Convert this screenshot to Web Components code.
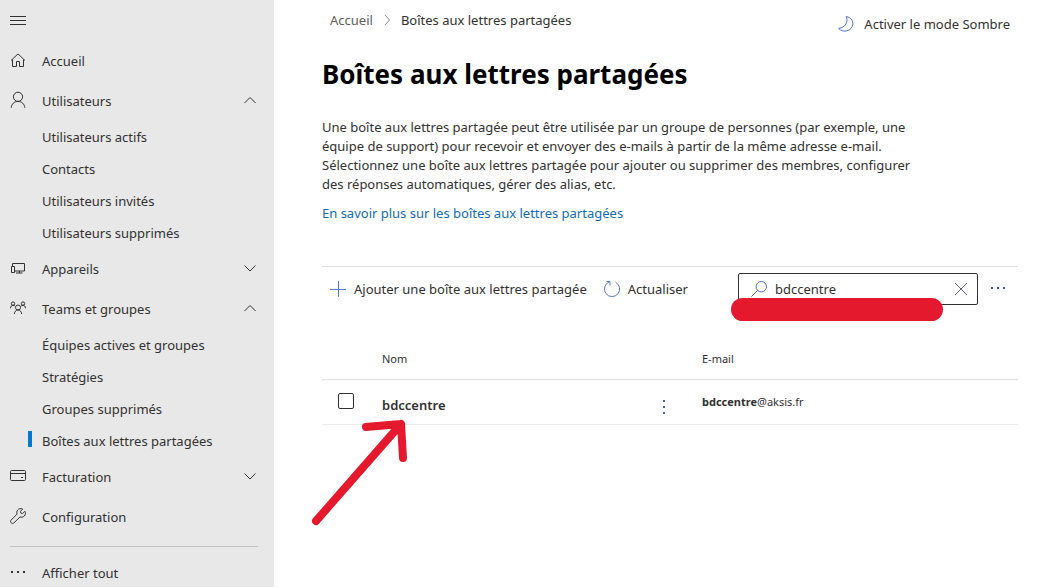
<!DOCTYPE html>
<html lang="fr">
<head>
<meta charset="utf-8">
<meta name="viewport" content="width=device-width, initial-scale=1">
<title>Boîtes aux lettres partagées</title>
<style>
  body {
    margin: 0;
    background: #fff;
    color: #323130;
    font-family: "Noto Sans", "Open Sans", sans-serif;
    font-size: 13px;
    line-height: 20px;
  }
</style>
</head>
<body>
<admin-shell>
  <side-nav slot="nav">
    <nav-group icon="home" href="#accueil">Accueil</nav-group>
    <nav-group icon="person" open>Utilisateurs
      <nav-link slot="items" href="#actifs">Utilisateurs actifs</nav-link>
      <nav-link slot="items" href="#contacts">Contacts</nav-link>
      <nav-link slot="items" href="#invites">Utilisateurs invités</nav-link>
      <nav-link slot="items" href="#supprimes">Utilisateurs supprimés</nav-link>
    </nav-group>
    <nav-group icon="devices" collapsible>Appareils</nav-group>
    <nav-group icon="team" open>Teams et groupes
      <nav-link slot="items" href="#equipes">Équipes actives et groupes</nav-link>
      <nav-link slot="items" href="#strategies">Stratégies</nav-link>
      <nav-link slot="items" href="#groupes-supprimes">Groupes supprimés</nav-link>
      <nav-link slot="items" href="#boites" current>Boîtes aux lettres partagées</nav-link>
    </nav-group>
    <nav-group icon="card" collapsible>Facturation</nav-group>
    <nav-group icon="wrench" href="#configuration">Configuration</nav-group>
    <nav-group slot="footer" icon="more" href="#tout">Afficher tout</nav-group>
  </side-nav>
  <top-bar>Boîtes aux lettres partagées</top-bar>
  <page-intro>
    <span slot="title">Boîtes aux lettres partagées</span>
    Une boîte aux lettres partagée peut être utilisée par un groupe de personnes (par exemple, une équipe de support) pour recevoir et envoyer des e-mails à partir de la même adresse e-mail. Sélectionnez une boîte aux lettres partagée pour ajouter ou supprimer des membres, configurer des réponses automatiques, gérer des alias, etc.
    <span slot="link">En savoir plus sur les boîtes aux lettres partagées</span>
  </page-intro>
  <command-bar></command-bar>
  <mailbox-table></mailbox-table>
</admin-shell>

<script>
  const ICONS = {
    menu: '<path d="M0 3.500h16M0 7.500h16M0 11.500h16"/>',
    home: '<path d="M1 7.500 8 .9 15 7.500M2.500 6.500v7h4V8.500h3v5h4v-7"/>',
    person: '<circle cx="8" cy="3.800" r="4.600"/><path d="M1.200 14.800C1.500 11 4.200 8.400 8 8.400s6.500 2.600 6.800 6.400"/>',
    devices: '<path d="M2.500 5V2.500h12v7.500H5M1.500 5.500h3v6h-3zM9.500 10v2M6 12h6.500"/>',
    team: '<circle cx="8" cy="6.500" r="2.500"/><path d="M4.300 13c.3-2.500 1.700-4 3.700-4s3.400 1.500 3.700 4M.5 7.300c.1-2 1.100-3 2.500-3 1 0 1.800.5 2.300 1.200M15.500 7.300c-.1-2-1.100-3-2.500-3-1 0-1.800.5-2.300 1.200"/><circle cx="3" cy="2.600" r="1.700"/><circle cx="13" cy="2.600" r="1.700"/>',
    card: '<rect x=".5" y="1.500" width="15" height="10" rx="1"/><path d="M.5 4.500h15M11 8.500h2"/>',
    wrench: '<path d="M14.900 2.300 12.600 4.600 10.900 4.100 10.400 2.400 12.700.1C10.800-.9 8.700-.4 7.600 1.100c-.9 1.200-1 2.700-.5 4L1.200 11c-.9.9-.9 2 0 2.800s2 .8 2.800 0l6-5.900c1.500.6 3.100.3 4.300-.9 1.300-1.300 1.500-3.100.6-4.700z"/>',
    more: '<g fill="currentColor" stroke="none"><rect x="1" y="6" width="2" height="2"/><rect x="7" y="6" width="2" height="2"/><rect x="13" y="6" width="2" height="2"/></g>',
    kebab: '<g fill="currentColor" stroke="none"><rect x="7" y="3" width="2" height="2"/><rect x="7" y="9" width="2" height="2"/><rect x="7" y="15" width="2" height="2"/></g>',
    up: '<path d="m2.500 10 5.500-5.500 5.500 5.500"/>',
    down: '<path d="m2.500 4.500 5.500 5.500 5.500-5.500"/>',
    right: '<path d="m6 3 4.500 5-4.500 5"/>',
    moon: '<path d="M8.300.6C10.500 5.700 7.500 11.500.7 12.500c3.800 4.300 11.500 3.100 13.700-2.300C16 6.100 13.400 1.300 8.300.6z"/>',
    plus: '<path d="M8.500 0v16M0 8.500h16"/>',
    refresh: '<path d="M11.500 1.200a7.600 7.600 0 1 1-6.500-.2M2.500.5H6v4"/>',
    search: '<circle cx="10.300" cy="5.700" r="5.200"/><path d="M6.600 9.400.3 15.700"/>',
    close: '<path d="m2 2 12 12M14 2 2 14"/>'
  };

  const define = (name, render) => customElements.define(name, class extends HTMLElement {
    connectedCallback() {
      if (this.shadowRoot) return;
      const t = document.createElement('template');
      t.innerHTML = render(this);
      this.attachShadow({ mode: 'open' }).append(t.content.cloneNode(true));
    }
  });

  const reset = `
    *, *::before { box-sizing: border-box; }
    button { background: none; border: 0; padding: 0; font: inherit; color: inherit; text-align: left; cursor: pointer; }
    a { color: inherit; text-decoration: none; }`;

  define('ui-icon', el => `
    <style>
      :host { display: block; flex: none; width: 16px; height: 16px; }
      svg { display: block; overflow: visible; }
    </style>
    <svg width="16" height="16" viewBox="0 0 16 16" fill="none" stroke="currentColor" aria-hidden="true">${ICONS[el.getAttribute('name')]}</svg>`);

  define('admin-shell', () => `
    <style>
      :host { display: grid; grid-template-columns: 274px minmax(0, 1fr); height: 100vh; overflow: hidden; }
      main { padding: 0 40px 0 48px; min-width: 0; overflow: hidden; }
    </style>
    <slot name="nav"></slot>
    <main><slot></slot></main>`);

  define('side-nav', () => `
    <style>${reset}
      :host { display: block; background: #e8e8e8; overflow: hidden; }
      .toggle { display: flex; align-items: center; width: 48px; height: 41px; padding-left: 10px; }
      hr { margin: 9px 16px 6px 10px; border: 0; border-top: 1px solid #c4c4c4; }
    </style>
    <button class="toggle" aria-label="Réduire le menu"><ui-icon name="menu"></ui-icon></button>
    <nav><slot></slot><hr><slot name="footer"></slot></nav>`);

  define('nav-group', el => {
    const open = el.hasAttribute('open');
    const href = el.getAttribute('href');
    const tag = href ? 'a' : 'button';
    const attrs = href ? `href="${href}"` : `aria-expanded="${open}"`;
    const chevron = href ? '' : `<ui-icon name="${open ? 'up' : 'down'}"></ui-icon>`;
    return `
    <style>${reset}
      :host { display: block; }
      .row { display: flex; align-items: center; gap: 16px; width: 100%; height: 40px; padding: 0 16px 0 10px; }
      .label { flex: 1; }
    </style>
    <${tag} class="row" ${attrs}><ui-icon name="${el.getAttribute('icon')}"></ui-icon><span class="label"><slot></slot></span>${chevron}</${tag}>
    <slot name="items"></slot>`;
  });

  define('nav-link', el => `
    <style>${reset}
      :host { display: block; }
      a { display: flex; align-items: center; height: 32px; padding-left: 28px; }
      a::before { content: ""; width: 4px; height: 16px; margin: 0 10px 4px 0; }
      a[aria-current]::before { background: #0078d4; }
    </style>
    <a href="${el.getAttribute('href')}"${el.hasAttribute('current') ? ' aria-current="page"' : ''}><slot></slot></a>`);

  define('top-bar', () => `
    <style>${reset}
      :host { display: flex; justify-content: space-between; align-items: flex-start; padding: 0 8px; }
      nav { display: flex; align-items: center; gap: 6px; height: 40px; }
      nav a { color: #605e5c; }
      nav ui-icon { color: #8a8886; }
      button { display: flex; align-items: center; gap: 10px; height: 48px; }
      button ui-icon { color: #4f6fd0; }
    </style>
    <nav aria-label="Fil d’Ariane"><a href="#accueil">Accueil</a><ui-icon name="right"></ui-icon><span aria-current="page"><slot></slot></span></nav>
    <button><ui-icon name="moon"></ui-icon>Activer le mode Sombre</button>`);

  define('page-intro', () => `
    <style>${reset}
      :host { display: block; padding-bottom: 43px; }
      h1 { margin: 0; padding: 8px 0 26px; font-size: 26px; line-height: 36px; font-weight: 700; color: #000; }
      p { margin: 0 0 10px; max-width: 600px; line-height: 19px; }
      a { display: block; width: fit-content; color: #0f6cbd; line-height: 19px; }
    </style>
    <h1><slot name="title"></slot></h1>
    <p><slot></slot></p>
    <a href="#aide"><slot name="link"></slot></a>`);

  define('command-bar', () => `
    <style>${reset}
      :host { display: flex; align-items: center; height: 44px; padding: 0 12px 0 8px; border-top: 1px solid #e1dfdd; }
      .action { display: flex; align-items: center; gap: 8px; margin-right: 17px; white-space: nowrap; }
      .action ui-icon { color: #4f7bd9; }
      .search { position: relative; display: flex; align-items: center; gap: 8px; width: 240px; height: 32px; margin-left: auto; padding: 0 8px 0 12px; border: 1px solid #323130; border-radius: 2px; }
      .search > ui-icon { color: #4f6bed; }
      input { flex: 1; min-width: 0; border: 0; outline: 0; padding: 0; background: none; font: inherit; color: inherit; }
      .clear { color: #605e7c; }
      .more { margin-left: 12px; color: #44546a; }
      .stroke { position: absolute; left: -8px; top: 24px; width: 212px; height: 23px; border-radius: 12px; background: #e5192d; }
    </style>
    <button class="action"><ui-icon name="plus"></ui-icon>Ajouter une boîte aux lettres partagée</button>
    <button class="action"><ui-icon name="refresh"></ui-icon>Actualiser</button>
    <div class="search">
      <ui-icon name="search"></ui-icon>
      <input type="text" value="bdccentre" aria-label="Rechercher">
      <button class="clear" aria-label="Effacer"><ui-icon name="close"></ui-icon></button>
      <span class="stroke"></span>
    </div>
    <button class="more" aria-label="Plus d’options"><ui-icon name="more"></ui-icon></button>`);

  define('mailbox-table', () => `
    <style>${reset}
      :host { display: block; padding-top: 28px; }
      table { width: 100%; border-collapse: separate; border-spacing: 0; table-layout: fixed; }
      th, td { padding: 0; text-align: left; font-weight: 400; border-bottom: 1px solid #e1dfdd; }
      th { height: 41px; font-size: 11px; }
      td { height: 45px; border-color: #edebe9; vertical-align: top; }
      .pick { width: 60px; }
      .name { width: 320px; }
      input { appearance: none; display: block; width: 16px; height: 16px; margin: 13px 0 0 16px; border: 1px solid #323130; border-radius: 2px; background: #fff; }
      .cell { position: relative; display: flex; align-items: center; justify-content: space-between; padding: 15px 30px 9px 0; font-weight: 600; }
      .cell ui-icon { color: #4a6785; }
      .mail { padding-top: 12px; font-size: 11px; }
      .arrow { position: absolute; left: -71px; top: 37px; pointer-events: none; }
    </style>
    <table>
      <thead><tr><th class="pick"></th><th class="name" scope="col">Nom</th><th scope="col">E-mail</th></tr></thead>
      <tbody><tr>
        <td><input type="checkbox" aria-label="Sélectionner bdccentre"></td>
        <td><div class="cell"><span>bdccentre</span><button aria-label="Autres actions"><ui-icon name="kebab"></ui-icon></button>
          <svg class="arrow" width="100" height="112" viewBox="0 0 100 112" fill="none" stroke="#e5192d" stroke-width="8" stroke-linecap="round" stroke-linejoin="round" aria-hidden="true"><path d="M5 104 90 7M55 10l35-3 2 34"/></svg></div></td>
        <td class="mail"><b>bdccentre</b>@aksis.fr</td>
      </tr></tbody>
    </table>`);
</script>
</body>
</html>
